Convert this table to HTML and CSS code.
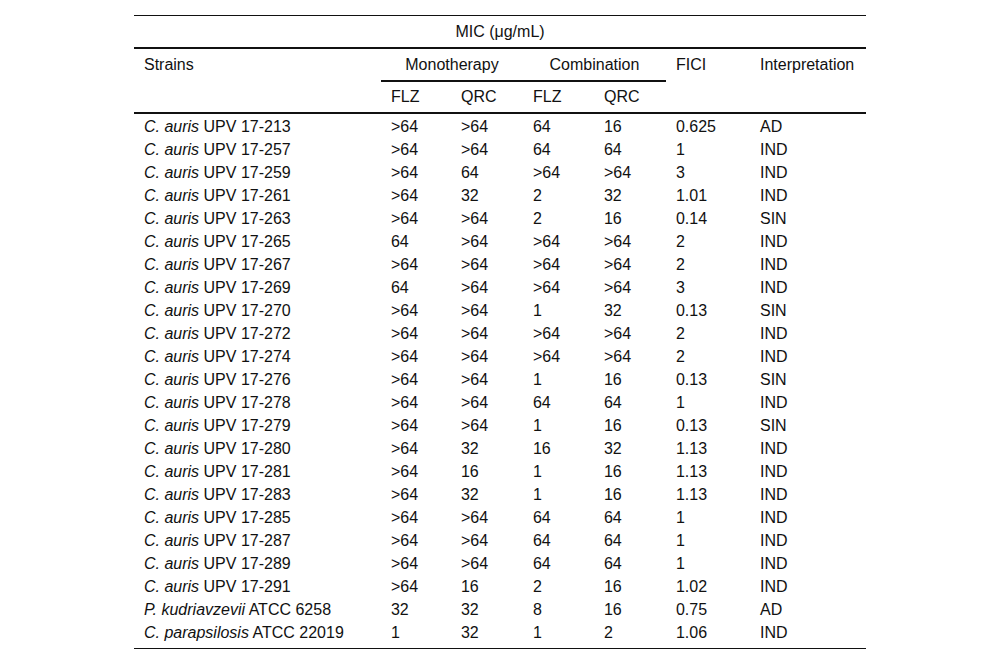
FILE: index.html
```html
<!DOCTYPE html>
<html>
<head>
<meta charset="utf-8">
<link rel="stylesheet" href="styles.css">
</head>
<body>
<table class="mic">
  <colgroup>
    <col class="c-strain"><col class="c-a"><col class="c-b"><col class="c-c"><col class="c-d"><col class="c-fici"><col class="c-int">
  </colgroup>
  <thead>
    <tr class="h1"><th colspan="7" class="center">MIC (μg/mL)</th></tr>
    <tr class="h2">
      <th rowspan="2" class="span">Strains</th>
      <th colspan="2" class="center group">Monotherapy</th>
      <th colspan="2" class="center group">Combination</th>
      <th rowspan="2" class="span">FICI</th>
      <th rowspan="2" class="span">Interpretation</th>
    </tr>
    <tr class="h3">
      <th>FLZ</th><th>QRC</th><th>FLZ</th><th>QRC</th>
    </tr>
  </thead>
  <tbody>
    <tr><td><i>C. auris</i> UPV 17-213</td><td>&gt;64</td><td>&gt;64</td><td>64</td><td>16</td><td>0.625</td><td>AD</td></tr>
    <tr><td><i>C. auris</i> UPV 17-257</td><td>&gt;64</td><td>&gt;64</td><td>64</td><td>64</td><td>1</td><td>IND</td></tr>
    <tr><td><i>C. auris</i> UPV 17-259</td><td>&gt;64</td><td>64</td><td>&gt;64</td><td>&gt;64</td><td>3</td><td>IND</td></tr>
    <tr><td><i>C. auris</i> UPV 17-261</td><td>&gt;64</td><td>32</td><td>2</td><td>32</td><td>1.01</td><td>IND</td></tr>
    <tr><td><i>C. auris</i> UPV 17-263</td><td>&gt;64</td><td>&gt;64</td><td>2</td><td>16</td><td>0.14</td><td>SIN</td></tr>
    <tr><td><i>C. auris</i> UPV 17-265</td><td>64</td><td>&gt;64</td><td>&gt;64</td><td>&gt;64</td><td>2</td><td>IND</td></tr>
    <tr><td><i>C. auris</i> UPV 17-267</td><td>&gt;64</td><td>&gt;64</td><td>&gt;64</td><td>&gt;64</td><td>2</td><td>IND</td></tr>
    <tr><td><i>C. auris</i> UPV 17-269</td><td>64</td><td>&gt;64</td><td>&gt;64</td><td>&gt;64</td><td>3</td><td>IND</td></tr>
    <tr><td><i>C. auris</i> UPV 17-270</td><td>&gt;64</td><td>&gt;64</td><td>1</td><td>32</td><td>0.13</td><td>SIN</td></tr>
    <tr><td><i>C. auris</i> UPV 17-272</td><td>&gt;64</td><td>&gt;64</td><td>&gt;64</td><td>&gt;64</td><td>2</td><td>IND</td></tr>
    <tr><td><i>C. auris</i> UPV 17-274</td><td>&gt;64</td><td>&gt;64</td><td>&gt;64</td><td>&gt;64</td><td>2</td><td>IND</td></tr>
    <tr><td><i>C. auris</i> UPV 17-276</td><td>&gt;64</td><td>&gt;64</td><td>1</td><td>16</td><td>0.13</td><td>SIN</td></tr>
    <tr><td><i>C. auris</i> UPV 17-278</td><td>&gt;64</td><td>&gt;64</td><td>64</td><td>64</td><td>1</td><td>IND</td></tr>
    <tr><td><i>C. auris</i> UPV 17-279</td><td>&gt;64</td><td>&gt;64</td><td>1</td><td>16</td><td>0.13</td><td>SIN</td></tr>
    <tr><td><i>C. auris</i> UPV 17-280</td><td>&gt;64</td><td>32</td><td>16</td><td>32</td><td>1.13</td><td>IND</td></tr>
    <tr><td><i>C. auris</i> UPV 17-281</td><td>&gt;64</td><td>16</td><td>1</td><td>16</td><td>1.13</td><td>IND</td></tr>
    <tr><td><i>C. auris</i> UPV 17-283</td><td>&gt;64</td><td>32</td><td>1</td><td>16</td><td>1.13</td><td>IND</td></tr>
    <tr><td><i>C. auris</i> UPV 17-285</td><td>&gt;64</td><td>&gt;64</td><td>64</td><td>64</td><td>1</td><td>IND</td></tr>
    <tr><td><i>C. auris</i> UPV 17-287</td><td>&gt;64</td><td>&gt;64</td><td>64</td><td>64</td><td>1</td><td>IND</td></tr>
    <tr><td><i>C. auris</i> UPV 17-289</td><td>&gt;64</td><td>&gt;64</td><td>64</td><td>64</td><td>1</td><td>IND</td></tr>
    <tr><td><i>C. auris</i> UPV 17-291</td><td>&gt;64</td><td>16</td><td>2</td><td>16</td><td>1.02</td><td>IND</td></tr>
    <tr><td><i>P. kudriavzevii</i> ATCC 6258</td><td>32</td><td>32</td><td>8</td><td>16</td><td>0.75</td><td>AD</td></tr>
    <tr class="last"><td><i>C. parapsilosis</i> ATCC 22019</td><td>1</td><td>32</td><td>1</td><td>2</td><td>1.06</td><td>IND</td></tr>
  </tbody>
</table>
</body>
</html>
```

FILE: styles.css
```css
html, body {
  margin: 0;
  padding: 0;
  background: #fff;
}

body {
  padding-top: 15px;
  font-family: "Liberation Sans", Arial, sans-serif;
  font-size: 16px;
  color: #111;
}

.mic {
  width: 732px;
  margin: 0 auto;
  table-layout: fixed;
  border-collapse: separate;
  border-spacing: 0;
  border-bottom: 1px solid #111;
}

.c-strain { width: 247px; }
.c-a { width: 70px; }
.c-b { width: 72px; }
.c-c { width: 71px; }
.c-d { width: 72px; }
.c-fici { width: 84px; }
.c-int { width: 116px; }

.mic th {
  font-weight: normal;
  text-align: left;
  vertical-align: top;
  padding: 6px 10px;
  line-height: 19px;
  white-space: nowrap;
}

.mic th.center { text-align: center; }

.h1 th {
  border-top: 1px solid #111;
  border-bottom: 2px solid #111;
}

.h2 th.group { border-bottom: 2px solid #111; }

.h2 th.span {
  border-bottom: 2px solid #111;
  padding-top: 6px;
}

.h3 th {
  padding: 5px 10px 6px;
  border-bottom: 2px solid #111;
}

.mic td {
  padding: 0 10px;
  line-height: 23px;
  white-space: nowrap;
  vertical-align: top;
}

.mic tbody tr:first-child td { padding-top: 0.5px; }
.mic tbody tr.last td { padding-bottom: 4.5px; }
```
